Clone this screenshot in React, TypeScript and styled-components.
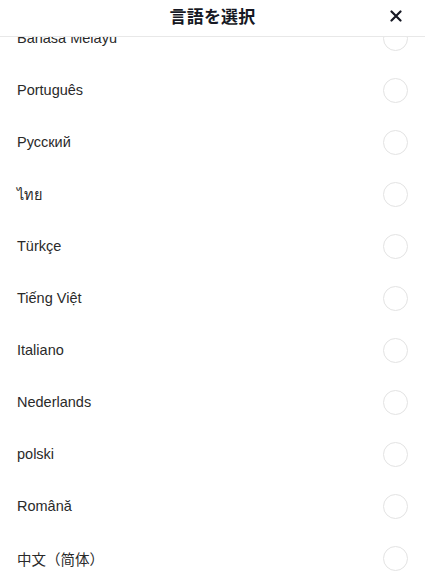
import React from 'react';
import styled, { createGlobalStyle } from 'styled-components';

const languages = [
  'Bahasa Melayu',
  'Português',
  'Русский',
  'ไทย',
  'Türkçe',
  'Tiếng Việt',
  'Italiano',
  'Nederlands',
  'polski',
  'Română',
  '中文（简体）',
];

const GlobalStyle = createGlobalStyle`
  html, body {
    margin: 0;
    padding: 0;
    background: #ffffff;
  }
  body {
    font-family: "Liberation Sans", "Noto Sans CJK JP", sans-serif;
    color: #2a2a2a;
  }
`;

export default function App() {
  return (
    <>
      <GlobalStyle />
      <Sheet>
        <Header>
          <Title>言語を選択</Title>
          <CloseButton aria-label="close">
            <svg width="12" height="12" viewBox="0 0 12 12">
              <path d="M1.5 1.5 L10.5 10.5 M10.5 1.5 L1.5 10.5" stroke="#161823" strokeWidth="2.2" strokeLinecap="round" />
            </svg>
          </CloseButton>
        </Header>
        <List>
          {languages.map((lang) => (
            <Row key={lang}>
              <Label>{lang}</Label>
              <Radio />
            </Row>
          ))}
        </List>
      </Sheet>
    </>
  );
}

const Sheet = styled.div`
  width: 425px;
  height: 582px;
  display: flex;
  flex-direction: column;
  overflow: hidden;
  background: #ffffff;
`;

const Header = styled.div`
  position: relative;
  z-index: 1;
  flex: 0 0 37px;
  display: flex;
  align-items: center;
  justify-content: center;
  background: #ffffff;
  border-bottom: 1px solid #e8e8e8;
  box-sizing: border-box;
  padding-bottom: 6px;
`;

const Title = styled.div`
  font-family: "Noto Sans CJK JP", sans-serif;
  font-size: 17px;
  font-weight: 700;
  color: #161823;
  letter-spacing: 0.2px;
`;

const CloseButton = styled.div`
  position: absolute;
  right: 23px;
  top: 10px;
  width: 12px;
  height: 12px;
  display: flex;
`;

const List = styled.div`
  flex: 1;
  overflow: hidden;
  margin-top: -25px;
`;

const Row = styled.div`
  height: 52px;
  display: flex;
  align-items: center;
  justify-content: space-between;
  padding: 0 17px;
`;

const Label = styled.div`
  font-size: 14.5px;
  color: #2a2a2a;
`;

const Radio = styled.div`
  box-sizing: border-box;
  width: 25px;
  height: 25px;
  border-radius: 50%;
  border: 1.5px solid #e3e3e3;
  margin-right: 0px;
`;
